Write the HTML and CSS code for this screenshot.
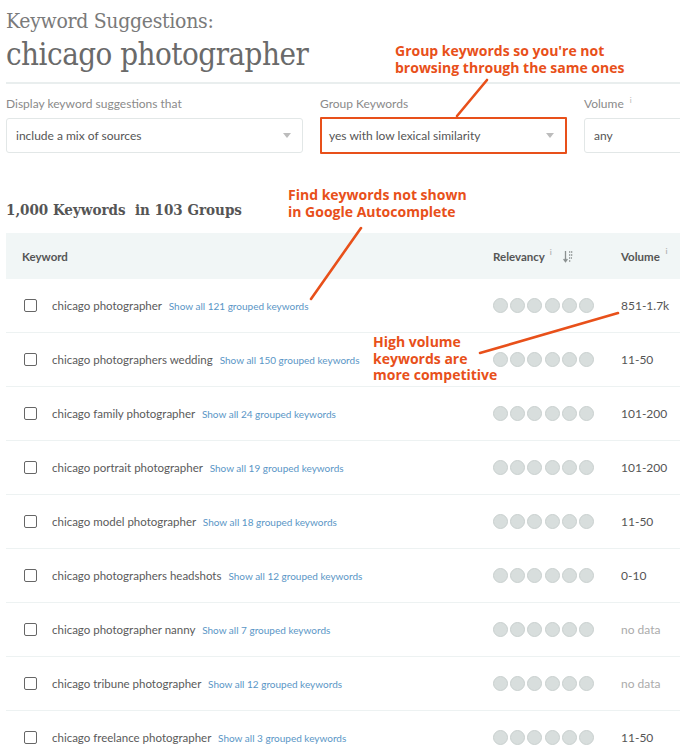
FILE: index.html
```html
<!DOCTYPE html>
<html>
<head>
<meta charset="utf-8">
<link rel="stylesheet" href="styles.css">
</head>
<body>
<div class="page">
  <header class="title">
    <h1 class="title-small">Keyword Suggestions:</h1>
    <h2 class="title-big">chicago photographer</h2>
  </header>

  <div class="filters">
    <div class="filter f-display">
      <div class="label">Display keyword suggestions that</div>
      <div class="select"><span>include a mix of sources</span><span class="caret"></span></div>
    </div>
    <div class="filter f-group">
      <div class="label">Group Keywords</div>
      <div class="select highlighted"><span>yes with low lexical similarity</span><span class="caret"></span></div>
    </div>
    <div class="filter f-volume">
      <div class="label">Volume <sup class="info">i</sup></div>
      <div class="select"><span>any</span></div>
    </div>
  </div>

  <h3 class="results-title">1,000 Keywords&nbsp; in 103 Groups</h3>

  <div class="table">
    <div class="row head">
      <div class="h-kw">Keyword</div>
      <div class="h-rel">Relevancy <sup class="info">i</sup>
        <svg class="sort" width="11" height="13" viewBox="0 0 11 13"><path d="M2.5 1v10.5M0.6 9l1.9 2.6 1.9-2.6" fill="none" stroke="#8a9090" stroke-width="1.3"/><path d="M6 2h4M6 5h4M6 8h3M6 11h2" stroke="#8a9090" stroke-width="1.3" stroke-dasharray="1.3 0.7"/></svg>
      </div>
      <div class="h-vol">Volume <sup class="info">i</sup></div>
      <div class="h-more"><sup class="info">i</sup></div>
    </div>

    <div class="row"><div class="c-check"><span class="box"></span></div><div class="c-kw">chicago photographer <a>Show all 121 grouped keywords</a></div><div class="c-rel"><i></i><i></i><i></i><i></i><i></i><i></i></div><div class="c-vol">851-1.7k</div></div>
    <div class="row"><div class="c-check"><span class="box"></span></div><div class="c-kw">chicago photographers wedding <a>Show all 150 grouped keywords</a></div><div class="c-rel"><i></i><i></i><i></i><i></i><i></i><i></i></div><div class="c-vol">11-50</div></div>
    <div class="row"><div class="c-check"><span class="box"></span></div><div class="c-kw">chicago family photographer <a>Show all 24 grouped keywords</a></div><div class="c-rel"><i></i><i></i><i></i><i></i><i></i><i></i></div><div class="c-vol">101-200</div></div>
    <div class="row"><div class="c-check"><span class="box"></span></div><div class="c-kw">chicago portrait photographer <a>Show all 19 grouped keywords</a></div><div class="c-rel"><i></i><i></i><i></i><i></i><i></i><i></i></div><div class="c-vol">101-200</div></div>
    <div class="row"><div class="c-check"><span class="box"></span></div><div class="c-kw">chicago model photographer <a>Show all 18 grouped keywords</a></div><div class="c-rel"><i></i><i></i><i></i><i></i><i></i><i></i></div><div class="c-vol">11-50</div></div>
    <div class="row"><div class="c-check"><span class="box"></span></div><div class="c-kw">chicago photographers headshots <a>Show all 12 grouped keywords</a></div><div class="c-rel"><i></i><i></i><i></i><i></i><i></i><i></i></div><div class="c-vol">0-10</div></div>
    <div class="row"><div class="c-check"><span class="box"></span></div><div class="c-kw">chicago photographer nanny <a>Show all 7 grouped keywords</a></div><div class="c-rel"><i></i><i></i><i></i><i></i><i></i><i></i></div><div class="c-vol nodata">no data</div></div>
    <div class="row"><div class="c-check"><span class="box"></span></div><div class="c-kw">chicago tribune photographer <a>Show all 12 grouped keywords</a></div><div class="c-rel"><i></i><i></i><i></i><i></i><i></i><i></i></div><div class="c-vol nodata">no data</div></div>
    <div class="row"><div class="c-check"><span class="box"></span></div><div class="c-kw">chicago freelance photographer <a>Show all 3 grouped keywords</a></div><div class="c-rel"><i></i><i></i><i></i><i></i><i></i><i></i></div><div class="c-vol">11-50</div></div>
  </div>

  <div class="note note-group">Group keywords so you're not<br>browsing through the same ones</div>
  <div class="note note-find">Find keywords not shown<br>in Google Autocomplete</div>
  <div class="note note-volume">High volume<br>keywords are<br>more competitive</div>

  <svg class="arrows" width="680" height="756" viewBox="0 0 680 756">
    <g stroke="#e8501a" stroke-width="2.6" stroke-linecap="round">
      <line x1="487" y1="80" x2="457" y2="116"/>
      <line x1="361" y1="228" x2="311" y2="299"/>
      <line x1="618" y1="313" x2="480" y2="353"/>
    </g>
  </svg>
</div>
</body>
</html>
```

FILE: styles.css
```css
html, body {
  margin: 0;
  padding: 0;
  overflow: hidden;
  background: #ffffff;
}
body {
  font-family: "Lato", "Liberation Sans", sans-serif;
  color: #555;
}
.page {
  position: relative;
  width: 680px;
  height: 756px;
  overflow: hidden;
}
.title {
  margin: 0 0 0 6px;
  padding-top: 7px;
  width: 674px;
  border-bottom: 2px solid #e9eeee;
  padding-bottom: 9px;
}
.title-small {
  margin: 0;
  font-family: "DejaVu Serif Condensed", "DejaVu Serif", serif;
  font-weight: normal;
  font-size: 21px;
  line-height: 28px;
  color: #7a7a7a;
  letter-spacing: -0.3px;
}
.title-big {
  margin: 0;
  font-family: "DejaVu Serif Condensed", "DejaVu Serif", serif;
  font-weight: normal;
  font-size: 31px;
  line-height: 38px;
  color: #6a6a6a;
  letter-spacing: -0.5px;
}
.filters {
  display: flex;
  gap: 17px;
  margin: 13px 0 0 6px;
  width: 760px;
}
.filter { display: flex; flex-direction: column; }
.f-display { width: 297px; }
.f-group { width: 247px; }
.f-volume { width: 150px; }
.label {
  font-size: 12px;
  color: #8a8a8a;
  height: 21px;
  line-height: 14px;
}
.info {
  font-size: 8px;
  color: #b5b5b5;
  vertical-align: top;
  position: relative;
  top: -4px;
  margin-left: 3px;
}
.select {
  box-sizing: border-box;
  height: 35px;
  border: 1px solid #e2e7e7;
  border-radius: 3px;
  display: flex;
  align-items: center;
  justify-content: space-between;
  padding: 0 11px 0 9px;
  font-size: 12px;
  color: #555;
}
.select.highlighted {
  border: 2.5px solid #e8501a;
  border-radius: 1px;
  margin-top: -1px;
  height: 37px;
  padding-left: 7px;
}
.caret {
  width: 0;
  height: 0;
  border-left: 4px solid transparent;
  border-right: 4px solid transparent;
  border-top: 5px solid #bcbcbc;
}
.results-title {
  margin: 46px 0 0 6px;
  font-family: "DejaVu Serif Condensed", "DejaVu Serif", serif;
  font-weight: bold;
  font-size: 15px;
  line-height: 20px;
  color: #555;
}
.table {
  margin: 13px 0 0 6px;
  width: 780px;
}
.row {
  display: grid;
  grid-template-columns: 46px 441px 127px 59px 107px;
  align-items: center;
  height: 53px;
  border-bottom: 1px solid #edf2f2;
  font-size: 11.5px;
}
.row.head {
  background: #f1f6f6;
  height: 46px;
  border-bottom: none;
  font-weight: bold;
  color: #555;
  font-size: 11.5px;
}
.h-kw { grid-column: 1 / 3; padding-left: 16px; }
.h-rel { display: flex; align-items: center; }
.h-rel .info { margin-left: 5px; }
.h-rel .sort { margin-left: 11px; }
.h-vol { padding-left: 1px; }
.c-check { padding-left: 18px; display: flex; }
.box {
  box-sizing: border-box;
  width: 13px;
  height: 13px;
  border: 1.5px solid #666;
  border-radius: 2px;
}
.c-kw { color: #5a5a5a; }
.c-kw a {
  color: #5a96c6;
  font-size: 10px;
  margin-left: 4px;
}
.c-rel { display: flex; gap: 2.2px; }
.c-rel i {
  box-sizing: border-box;
  width: 15px;
  height: 15px;
  border-radius: 50%;
  background: #d8dedd;
  border: 1px solid #c9d0cf;
}
.c-vol { padding-left: 1px; color: #555; font-size: 12px; }
.c-vol.nodata { color: #ababab; }
.note {
  position: absolute;
  font-family: "Open Sans", "Lato", sans-serif;
  font-weight: bold;
  color: #e8501a;
  font-size: 14px;
  line-height: 16.5px;
}
.note-group { left: 395px; top: 43px; }
.note-find { left: 288px; top: 187px; }
.note-volume { left: 373px; top: 334px; }
.arrows {
  position: absolute;
  left: 0;
  top: 0;
  pointer-events: none;
}
```
